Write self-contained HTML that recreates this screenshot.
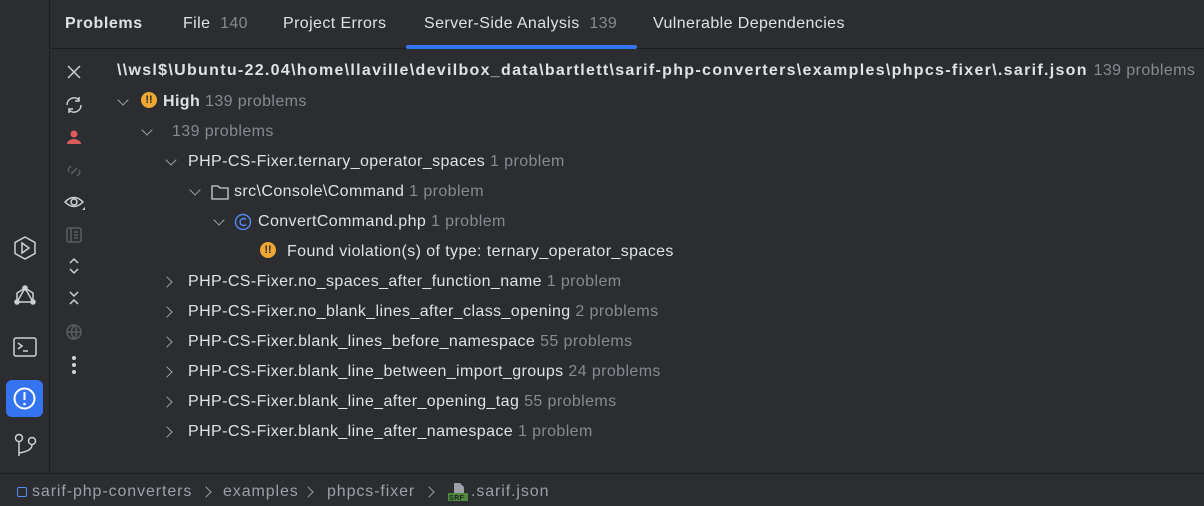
<!DOCTYPE html>
<html><head><meta charset="utf-8"><style>
body{margin:0;width:1204px;height:506px;background:#2b2d30;font-family:"Liberation Sans",sans-serif;color:#dfe1e5;position:relative;overflow:hidden;font-size:16px;letter-spacing:0.4px}
.a{position:absolute;white-space:nowrap}
.g{color:#868a91}
.row{position:absolute;height:30px;line-height:30px;white-space:nowrap}
.chev{position:absolute;width:7px;height:7px;border-right:1.5px solid #9da0a8;border-bottom:1.5px solid #9da0a8}
.down{transform:rotate(45deg)}
.right{transform:rotate(-45deg)}
.warn{position:absolute;width:16px;height:16px;border-radius:50%;background:#f0a732;color:#2b2d30;font-weight:bold;font-size:11px;line-height:16px;text-align:center;letter-spacing:0}
.bc{color:#9da0a8;letter-spacing:0.9px}
</style></head><body>
<div class="a" style="left:0;top:0;width:49px;height:473px;border-right:1px solid #1e1f22"></div>
<div class="a" style="left:50px;top:48px;width:1154px;height:1px;background:#1e1f22"></div>
<div class="a" style="left:0;top:473px;width:1204px;height:1px;background:#1e1f22"></div>
<div class="a" style="left:65px;top:15px;font-weight:bold;font-size:16px;letter-spacing:0.6px">Problems</div>
<div class="a" style="left:183px;top:15px">File <span class="g">&nbsp;140</span></div>
<div class="a" style="left:283px;top:15px">Project Errors</div>
<div class="a" style="left:424px;top:15px">Server-Side Analysis <span class="g">&nbsp;139</span></div>
<div class="a" style="left:406px;top:45px;width:231px;height:4px;border-radius:2px;background:#3574f0"></div>
<div class="a" style="left:653px;top:15px">Vulnerable Dependencies</div>

<svg class="a" style="left:60px;top:60px" width="30" height="320" fill="none" stroke="#ced0d6" stroke-width="1.5">
<path d="M8 6l12 12M20 6L8 18"/>
<path d="M7 45a7 7 0 0 1 12-5M21 45a7 7 0 0 1-12 5M19 37v4h-4M9 53v-4h4"/>
<circle cx="14" cy="74" r="3.5" fill="#db5c5c" stroke="none"/><path d="M7 84a7 5 0 0 1 14 0z" fill="#db5c5c" stroke="none"/>
<path d="M11 114l6-6M9 112a3 3 0 0 1 0-4l2-2M19 110a3 3 0 0 1 0 4l-2 2" stroke="#5a5d63"/>
<path d="M5 142q9-9 18 0q-9 9-18 0z"/><circle cx="14" cy="142" r="3"/><path d="M22 150l3 0 0-3z" fill="#ced0d6" stroke="none"/>
<rect x="7" y="168" width="14" height="14" rx="2" stroke="#5a5d63"/><path d="M11 168v14M14 172h4M14 175h4M14 178h4" stroke="#5a5d63"/>
<path d="M10 203l4-4 4 4M10 209l4 4 4-4"/>
<path d="M10 232l4 4 4-4M10 244l4-4 4 4"/>
<circle cx="14" cy="272" r="7" stroke="#5a5d63"/><path d="M7 272h14M14 265q-5 7 0 14q5-7 0-14" stroke="#5a5d63"/>
<circle cx="14" cy="298" r="1.3" fill="#ced0d6"/><circle cx="14" cy="305" r="1.3" fill="#ced0d6"/><circle cx="14" cy="312" r="1.3" fill="#ced0d6"/>
</svg>

<svg class="a" style="left:6px;top:232px" width="38" height="236" fill="none" stroke="#ced0d6" stroke-width="1.5">
<path d="M19 5l10 5.5v11L19 27 9 21.5v-11z"/><path d="M16 11v10l7-5z"/>
<path d="M19 56l-8 14h16z"/><circle cx="19" cy="56" r="2" fill="#ced0d6"/><circle cx="11" cy="70" r="2" fill="#ced0d6"/><circle cx="27" cy="70" r="2" fill="#ced0d6"/><path d="M19 56l8 5v9M19 56l-8 5v9"/>
<rect x="8" y="106" width="22" height="18" rx="2"/><path d="M12 111l4 3-4 3M17 119h5"/>
<rect x="0" y="148" width="37" height="37" rx="6" fill="#3574f0" stroke="none"/><circle cx="18.5" cy="166.5" r="10" stroke="#fff" stroke-width="2"/><path d="M18.5 160v8" stroke="#fff" stroke-width="2"/><circle cx="18.5" cy="172" r="1.3" fill="#fff" stroke="none"/>
<circle cx="13" cy="206" r="3.5"/><circle cx="26" cy="209" r="3.5"/><path d="M13 210v14M26 213q0 6-13 8"/>
</svg>

<div class="a" style="left:117px;top:62px;font-weight:bold;letter-spacing:1.3px">\\wsl$\Ubuntu-22.04\home\llaville\devilbox_data\bartlett\sarif-php-converters\examples\phpcs-fixer\.sarif.json <span class="g" style="font-weight:normal;letter-spacing:0.4px">139 problems</span></div>

<div class="chev down" style="left:119px;top:96px"></div>
<div class="warn" style="left:141px;top:92px">!!</div>
<div class="row" style="left:163px;top:87px"><b>High</b> <span class="g">139 problems</span></div>
<div class="chev down" style="left:143px;top:126px"></div>
<div class="row" style="left:172px;top:117px"><span class="g">139 problems</span></div>
<div class="chev down" style="left:167px;top:156px"></div>
<div class="row" style="left:188px;top:147px">PHP-CS-Fixer.ternary_operator_spaces <span class="g">1 problem</span></div>
<div class="chev down" style="left:191px;top:186px"></div>
<svg class="a" style="left:211px;top:184px" width="18" height="16" fill="none" stroke="#ced0d6" stroke-width="1.3"><path d="M1 2h6l2 2h8v11H1z"/></svg>
<div class="row" style="left:234px;top:177px">src\Console\Command <span class="g">1 problem</span></div>
<div class="chev down" style="left:215px;top:216px"></div>
<svg class="a" style="left:234px;top:213px" width="18" height="18" fill="none" stroke="#548af7" stroke-width="1.4"><circle cx="9" cy="9" r="7.5"/><path d="M12 6.5a3.5 3.5 0 1 0 0 5"/></svg>
<div class="row" style="left:258px;top:207px">ConvertCommand.php <span class="g">1 problem</span></div>
<div class="warn" style="left:260px;top:242px">!!</div>
<div class="row" style="left:287px;top:237px">Found violation(s) of type: ternary_operator_spaces</div>

<div class="chev right" style="left:163px;top:278px"></div>
<div class="row" style="left:188px;top:267px">PHP-CS-Fixer.no_spaces_after_function_name <span class="g">1 problem</span></div>
<div class="chev right" style="left:163px;top:308px"></div>
<div class="row" style="left:188px;top:297px">PHP-CS-Fixer.no_blank_lines_after_class_opening <span class="g">2 problems</span></div>
<div class="chev right" style="left:163px;top:338px"></div>
<div class="row" style="left:188px;top:327px">PHP-CS-Fixer.blank_lines_before_namespace <span class="g">55 problems</span></div>
<div class="chev right" style="left:163px;top:368px"></div>
<div class="row" style="left:188px;top:357px">PHP-CS-Fixer.blank_line_between_import_groups <span class="g">24 problems</span></div>
<div class="chev right" style="left:163px;top:398px"></div>
<div class="row" style="left:188px;top:387px">PHP-CS-Fixer.blank_line_after_opening_tag <span class="g">55 problems</span></div>
<div class="chev right" style="left:163px;top:428px"></div>
<div class="row" style="left:188px;top:417px">PHP-CS-Fixer.blank_line_after_namespace <span class="g">1 problem</span></div>

<div class="a" style="left:17px;top:487px;width:8px;height:8px;border:1.5px solid #548af7;border-radius:2px"></div>
<div class="a bc" style="left:32px;top:483px">sarif-php-converters</div>
<div class="chev right" style="left:202px;top:488px"></div>
<div class="a bc" style="left:223px;top:483px">examples</div>
<div class="chev right" style="left:304px;top:488px"></div>
<div class="a bc" style="left:327px;top:483px">phpcs-fixer</div>
<div class="chev right" style="left:425px;top:488px"></div>
<svg class="a" style="left:447px;top:482px" width="22" height="20"><path d="M7 1h6l4 4v6H7z" fill="#9da0a8"/><rect x="1" y="11" width="20" height="8" fill="#4e8a3e"/><text x="2" y="18" font-size="7" font-family="Liberation Sans" font-weight="bold" fill="#1e1f22">SRF</text></svg>
<div class="a bc" style="left:471px;top:483px">.sarif.json</div>
</body></html>
